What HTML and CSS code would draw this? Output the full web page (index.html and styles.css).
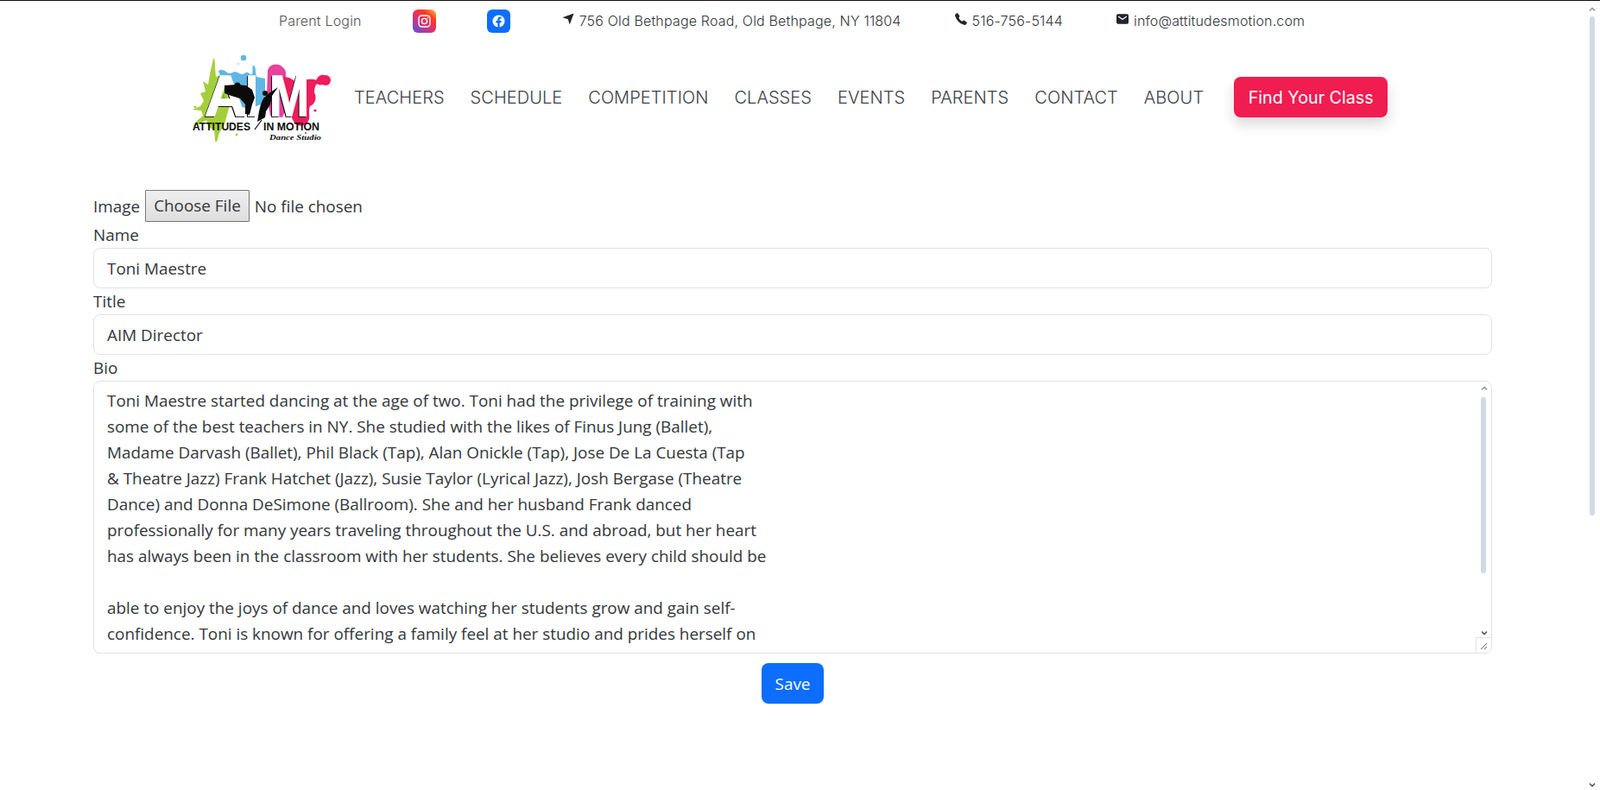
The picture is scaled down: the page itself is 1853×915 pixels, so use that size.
FILE: index.html
```html
<!DOCTYPE html>
<html lang="en">
<head>
<meta charset="utf-8">
<title>Attitudes in Motion</title>
<link rel="stylesheet" href="styles.css">
</head>
<body>
<header class="site-header">
  <div class="topbar">
    <a class="topbar-login" href="#">Parent Login</a>
    <a class="social" href="#" aria-label="Instagram">
      <svg viewBox="0 0 27 27" width="27" height="27">
        <defs>
          <linearGradient id="ig" x1="0.1" y1="1" x2="0.9" y2="0">
            <stop offset="0" stop-color="#5b51d8"/>
            <stop offset="0.45" stop-color="#e1306c"/>
            <stop offset="0.75" stop-color="#fd3a1d"/>
            <stop offset="1" stop-color="#fcaf45"/>
          </linearGradient>
        </defs>
        <rect width="27" height="27" rx="6" fill="url(#ig)"/>
        <rect x="7" y="7" width="13" height="13" rx="3.5" fill="none" stroke="#fff" stroke-width="1.4"/>
        <circle cx="13.5" cy="13.5" r="3.1" fill="none" stroke="#fff" stroke-width="1.4"/>
        <circle cx="17.5" cy="9.5" r="0.8" fill="#fff"/>
      </svg>
    </a>
    <a class="social" href="#" aria-label="Facebook">
      <svg viewBox="0 0 27 27" width="27" height="27">
        <rect width="27" height="27" rx="6" fill="#0d6efd"/>
        <circle cx="13.5" cy="13.5" r="7" fill="#fff"/>
        <path d="M12.3 21v-5.600h-1.900v-2.300h1.900v-1.700c0-1.900 1.100-2.900 2.800-2.900.8 0 1.600.1 1.600.1v1.900h-.9c-.9 0-1.200.6-1.200 1.200v1.400h2.100l-.3 2.300h-1.800V21z" fill="#0d6efd"/>
      </svg>
    </a>
    <span class="contact">
      <svg class="contact-icon" viewBox="0 0 16 16" width="14" height="14"><path d="M15.500.5 10 15.500l-2.200-7.300L.5 6z" fill="#212529"/></svg>
      756 Old Bethpage Road, Old Bethpage, NY 11804
    </span>
    <span class="contact">
      <svg class="contact-icon" viewBox="0 0 16 16" width="14" height="14"><path d="M3.700.6 6 3.600c.3.400.3.900 0 1.300L4.900 6.400c.8 2 2.700 3.900 4.700 4.700l1.500-1.100c.4-.3.900-.3 1.300 0l3 2.300c.6.400.6 1.200.1 1.700l-1.300 1.300c-.6.600-1.500.8-2.300.5C5.900 14 2 10.100.2 4.100c-.3-.8-.1-1.700.5-2.300L2 .5c.5-.5 1.300-.4 1.700.1z" fill="#212529"/></svg>
      516-756-5144
    </span>
    <span class="contact">
      <svg class="contact-icon" viewBox="0 0 16 13" width="14" height="12"><path d="M2 0h12a2 2 0 0 1 2 2v9a2 2 0 0 1-2 2H2a2 2 0 0 1-2-2V2a2 2 0 0 1 2-2z" fill="#212529"/><path d="M2.500 3 8 7l5.500-4" fill="none" stroke="#fff" stroke-width="1.500"/></svg>
      info@attitudesmotion.com
    </span>
  </div>
  <nav class="navbar">
    <a class="logo" href="#" aria-label="Attitudes in Motion Dance Studio">
      <svg viewBox="0 0 163 110" width="163" height="110">
        <g fill="#a4cf3c">
          <path d="M25 10c2-1 2 5 2 10l1 11 9-4 6 8-4 7 5 22-6 22-6 10-3 10c-1 1-2 0-2-2l-1-12-6-2-3-9-9 5-7 3 5-7 7-6-2-6-10-1 9-4 4-6-4-9 6-2-3-12 6 4 2-12z"/>
          <circle cx="4" cy="66" r="1.500"/><circle cx="52" cy="98" r="1.500"/><circle cx="45" cy="92" r="1"/>
        </g>
        <g fill="#5fb6e6">
          <path d="M31 24c3-2 7-1 10 2 3 2 6 0 9-1 3 0 5 3 9 3 3-1 4-3 6-2 3 1 3 3 5 2 1-3 0-9 1-10 2-1 3 3 3 7l1 6 10 2v28l-18 7-18-4-10-18z"/>
          <circle cx="60" cy="9" r="3.300"/>
          <circle cx="54" cy="16" r=".8"/>
        </g>
        <g fill="#e8429b">
          <path d="M88 24c1-6 7-9 13-7 5 2 9 6 8 13l4 30-8 18-14-2-4-24z"/>
        </g>
        <g fill="#ee1d5c">
          <path d="M103 32c6-2 11 0 15 3 4 2 8 1 12 0 4-1 10-2 14 0 2-4 5-7 9-6 4 1 5 6 2 9s-8 3-10 1c-2 2-3 6-3 10 3 5 2 13-5 16-2 5 0 10-1 15-2 6-7 9-13 7-5-2-6-7-8-11-4-3-9-7-9-14z"/>
          <circle cx="155" cy="35" r="6"/>
          <circle cx="143" cy="70" r="1.600"/><circle cx="132" cy="96" r="1"/>
        </g>
        <path d="M37 50l-4 12h8z" fill="#7fae3a"/>
        <g class="logo-letters">
          <text class="logo-aim" x="15" y="76" textLength="48" lengthAdjust="spacingAndGlyphs">A</text>
          <text class="logo-aim" x="62" y="76" textLength="15" lengthAdjust="spacingAndGlyphs">I</text>
          <text class="logo-aim" x="90" y="76" textLength="46" lengthAdjust="spacingAndGlyphs">M</text>
        </g>
        <path d="M38 41 51 40 63 41 70 46 73 55 70 63 67 75 62 74 62 63 56 56 46 53 38 50z" fill="#0b0b0b"/>
        <circle cx="53" cy="41" r="3.500" fill="#0b0b0b"/>
        <path d="M100 43 93 53 91 63 86 71 85 78 76 83 78 71 80 63 83 56 88 51z" fill="#0b0b0b"/>
        <circle cx="85" cy="50" r="3" fill="#0b0b0b"/>
        <path d="M73 92 81 81" stroke="#0b0b0b" stroke-width="1.200"/>
        <text class="logo-name" x="1" y="93" textLength="67" lengthAdjust="spacingAndGlyphs">ATTITUDES</text>
        <text class="logo-name" x="83" y="93" textLength="65" lengthAdjust="spacingAndGlyphs">IN MOTION</text>
        <text class="logo-sub" x="90" y="104" textLength="60" lengthAdjust="spacingAndGlyphs">Dance Studio</text>
      </svg>
    </a>
    <ul class="nav-list">
      <li><a href="#">TEACHERS</a></li>
      <li><a href="#">SCHEDULE</a></li>
      <li><a href="#">COMPETITION</a></li>
      <li><a href="#">CLASSES</a></li>
      <li><a href="#">EVENTS</a></li>
      <li><a href="#">PARENTS</a></li>
      <li><a href="#">CONTACT</a></li>
      <li><a href="#">ABOUT</a></li>
    </ul>
    <a class="cta" href="#">Find Your Class</a>
  </nav>
</header>
<main class="editor">
  <div class="file-row">
    <label class="field-label" for="image">Image</label>
    <span class="file-btn" id="image">Choose File</span>
    <span>No file chosen</span>
  </div>
  <label class="field-label" for="name">Name</label>
  <input class="field" id="name" type="text" value="Toni Maestre">
  <label class="field-label" for="title">Title</label>
  <input class="field" id="title" type="text" value="AIM Director">
  <label class="field-label" for="bio">Bio</label>
  <div class="bio-wrap">
    <textarea class="field bio" id="bio" spellcheck="false">Toni Maestre started dancing at the age of two. Toni had the privilege of training with
some of the best teachers in NY. She studied with the likes of Finus Jung (Ballet),
Madame Darvash (Ballet), Phil Black (Tap), Alan Onickle (Tap), Jose De La Cuesta (Tap
&amp; Theatre Jazz) Frank Hatchet (Jazz), Susie Taylor (Lyrical Jazz), Josh Bergase (Theatre
Dance) and Donna DeSimone (Ballroom). She and her husband Frank danced
professionally for many years traveling throughout the U.S. and abroad, but her heart
has always been in the classroom with her students. She believes every child should be

able to enjoy the joys of dance and loves watching her students grow and gain self-
confidence. Toni is known for offering a family feel at her studio and prides herself on</textarea>
    <div class="bio-scroll" aria-hidden="true">
      <svg class="arrow arrow-up" viewBox="0 0 8 6" width="8" height="6"><path d="M1 4.500 4 1.500l3 3" fill="none" stroke="#9a9a9a" stroke-width="1.600"/></svg>
      <div class="bio-thumb"></div>
      <svg class="arrow arrow-down" viewBox="0 0 8 6" width="8" height="6"><path d="M1 1.500 4 4.500l3-3" fill="none" stroke="#555" stroke-width="1.600"/></svg>
    </div>
    <div class="bio-corner" aria-hidden="true">
      <svg viewBox="0 0 10 10" width="10" height="10"><path d="M1 9 8 2M5 9 8 6" stroke="#666" stroke-width="1" fill="none"/></svg>
    </div>
  </div>
  <div class="actions"><button class="save" type="button">Save</button></div>
</main>
<div class="page-scroll" aria-hidden="true">
  <svg class="arrow arrow-up" viewBox="0 0 8 6" width="8" height="6"><path d="M1 4.500 4 1.500l3 3" fill="none" stroke="#9a9a9a" stroke-width="1.600"/></svg>
  <div class="page-thumb"></div>
  <svg class="arrow arrow-down" viewBox="0 0 8 6" width="8" height="6"><path d="M1 1.500 4 4.500l3-3" fill="none" stroke="#555" stroke-width="1.600"/></svg>
</div>
</body>
</html>
```
FILE: styles.css
```css
* { box-sizing: border-box; }
html, body { height: 100%; }
body {
  margin: 0;
  overflow: hidden;
  background: #fff;
  color: #33373b;
  font-family: "Open Sans", "Noto Sans", sans-serif;
  font-size: 18.900px;
  line-height: 30px;
}
a { color: inherit; text-decoration: none; }

.site-header { font-family: Inter, "Liberation Sans", sans-serif; border-top: 1px solid #111; }
.topbar {
  display: flex;
  align-items: center;
  height: 46px;
  padding-left: 323px;
  font-size: 16px;
  letter-spacing: .170px;
  line-height: 22px;
  font-weight: 300;
}
.topbar-login { color: #555; margin-right: 59px; }
.social { display: flex; margin-right: 59px; }
.social + .social { margin-right: 60px; }
.contact { display: flex; align-items: center; gap: 6px; margin-right: 62px; white-space: nowrap; }
.contact-icon { position: relative; top: -2px; }

.navbar { display: flex; align-items: center; height: 131px; padding-left: 222px; }
.logo { display: flex; margin-right: 25px; }
.logo-letters { filter: drop-shadow(-1px 1.500px 0 #111); }
.logo-aim { font: 700 66px "Liberation Sans", sans-serif; fill: #fff; stroke: #fff; stroke-width: 1.500px; }
.logo-name { font: 700 13.500px "Liberation Sans", sans-serif; fill: #0b0b0b; }
.logo-sub { font: italic 700 9px "Liberation Serif", serif; fill: #111; }
.nav-list { display: flex; gap: 30px; margin: 0; padding: 0; list-style: none; font-size: 20px; letter-spacing: .060px; line-height: 30px; font-weight: 300; color: #3c4146; }
.cta {
  margin-left: 35px;
  padding: 11px 16px 9px;
  width: 178px;
  text-align: center;
  border-radius: 8px;
  background: #f11c50;
  color: #fff;
  font-size: 19.700px;
  line-height: 27px;
  font-weight: 400;
  box-shadow: 0 8px 16px rgba(0, 0, 0, .15);
}

.editor { width: 1620px; margin: 0 0 0 108px; padding-top: 42px; }
.file-row { display: flex; align-items: center; gap: 6px; height: 37px; }
.file-btn {
  display: block;
  height: 37px;
  padding: 0 9px;
  border: 1px solid #767676;
  border-radius: 1px;
  background: linear-gradient(#efefef, #dedede);
  line-height: 35px;
}
.field-label { display: block; height: 30px; line-height: 31px; }
.field {
  display: block;
  width: 100%;
  height: 47px;
  margin: 0;
  padding: 8px 15px;
  border: 1px solid #dee2e6;
  border-radius: 8px;
  background: #fff;
  color: #33373b;
  font: inherit;
  outline: none;
}
.bio-wrap { position: relative; }
.bio { height: 316px; resize: none; overflow: hidden; white-space: pre; padding-top: 7px; }
.bio-scroll { position: absolute; top: 1px; right: 1px; bottom: 17px; width: 17px; }
.arrow { position: absolute; left: 4.500px; }
.arrow-up { top: 5px; }
.arrow-down { bottom: 4px; }
.bio-thumb { position: absolute; top: 18px; left: 5px; width: 6px; height: 204px; border-radius: 3px; background: #cfdbe6; }
.bio-corner { position: absolute; right: 1px; bottom: 1px; width: 18px; height: 18px; border: 1px solid #dee2e6; border-right: 0; border-bottom: 0; display: flex; align-items: center; justify-content: center; }
.actions { display: flex; justify-content: center; padding-top: 11px; }
.save {
  height: 47px;
  padding: 0 15.500px;
  border: 0;
  border-radius: 8px;
  background: #0d6efd;
  color: #fff;
  font: inherit;
  font-weight: 500;
}

.page-scroll { position: fixed; top: 0; right: 0; bottom: 0; width: 16px; }
.page-scroll .arrow { left: 3px; }
.page-scroll .arrow-up { top: 8px; }
.page-scroll .arrow-down { bottom: 3px; }
.page-thumb { position: absolute; top: 19px; left: 4px; width: 6px; height: 578px; border-radius: 3px; background: #cfdbe6; }
```
